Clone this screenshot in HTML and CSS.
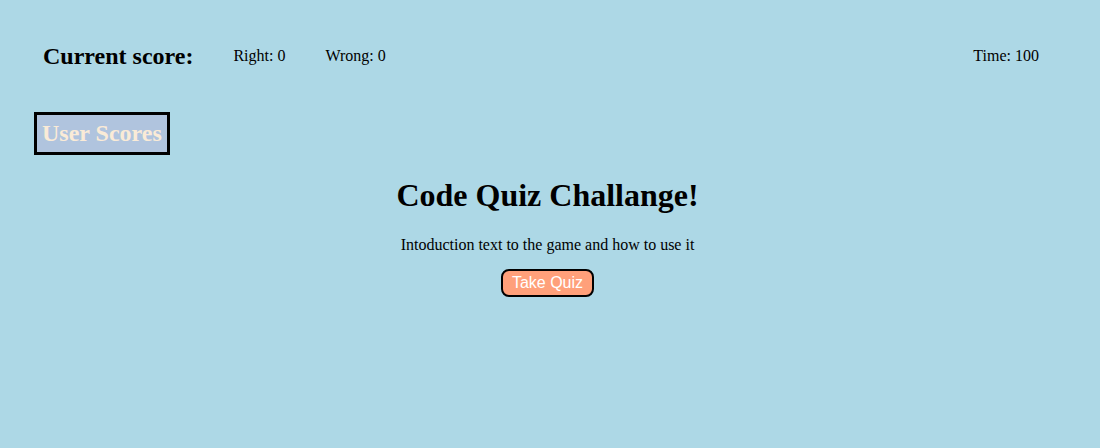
FILE: index.html
```html
<!DOCTYPE html>
<html>
<head>
<meta charset="utf-8">
<link rel="stylesheet" href="styles.css">
</head>
<body>
<header class="header">
  <h2 class="score-title">Current score:</h2>
  <span class="stat">Right: 0</span>
  <span class="stat">Wrong: 0</span>
  <span class="stat time">Time: 100</span>
</header>
<div class="scores-row">
  <a class="user-scores">User Scores</a>
</div>
<main class="intro">
  <h1 class="quiz-title">Code Quiz Challange!</h1>
  <p class="intro-text">Intoduction text to the game and how to use it</p>
  <button class="take-quiz">Take Quiz</button>
</main>
</body>
</html>
```
FILE: styles.css
```css
html, body {
  margin: 0;
  background: #add8e6;
  font-family: "Liberation Serif", "Times New Roman", serif;
  color: #000;
}
.header {
  display: flex;
  align-items: center;
  gap: 40px;
  padding: 42px 61px 0 43px;
}
.score-title {
  margin: 0;
  font-size: 24px;
  line-height: 28px;
  font-weight: bold;
}
.stat {
  font-size: 16px;
}
.time {
  margin-left: auto;
}
.scores-row {
  padding: 42px 0 0 34px;
  display: flex;
}
.user-scores {
  display: inline-block;
  border: 3px solid #000;
  background: #b0c4de;
  color: #faebd7;
  font-size: 24px;
  font-weight: bold;
  line-height: 28px;
  padding: 4px 5px 5px 5px;
}
.intro {
  display: flex;
  flex-direction: column;
  align-items: center;
  padding-right: 5px;
}
.quiz-title {
  margin: 22px 0 0 0;
  font-size: 32px;
  line-height: 37px;
}
.intro-text {
  margin: 22px 0 0 0;
  font-size: 16px;
  line-height: 18px;
}
.take-quiz {
  margin-top: 15px;
  background: #ffa07a;
  color: #fff;
  font-family: "Liberation Sans", Arial, sans-serif;
  font-size: 16px;
  line-height: 18px;
  padding: 3px 9px 3px 9px;
  height: 28px;
  border: 2px solid #000;
  border-radius: 8px;
}
```
